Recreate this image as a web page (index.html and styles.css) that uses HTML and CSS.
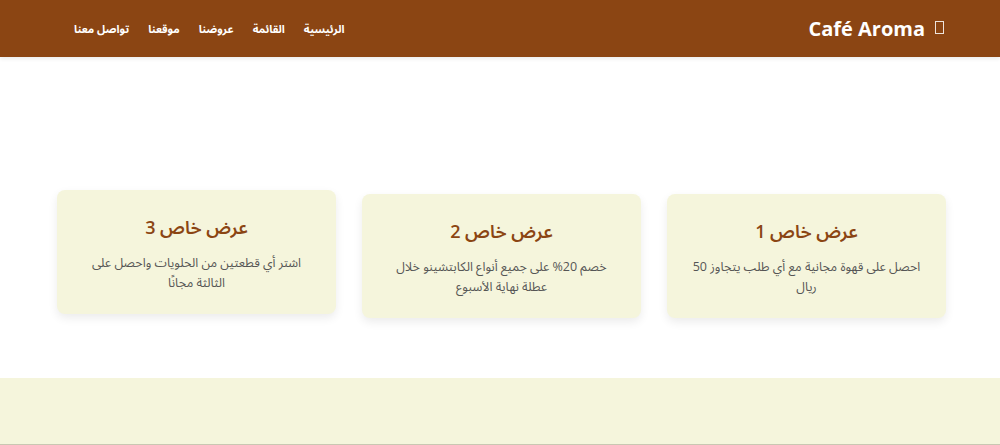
FILE: index.html
```html
<!DOCTYPE html>
<html lang="ar" dir="rtl">
<head>
<meta charset="utf-8">
<title>Café Aroma</title>
<link rel="stylesheet" href="styles.css">
</head>
<body>
<header class="site-header">
  <div class="logo"><span class="icon-box"></span><span class="logo-text">Café Aroma</span></div>
  <nav class="nav">
    <a href="#">الرئيسية</a>
    <a href="#">القائمة</a>
    <a href="#">عروضنا</a>
    <a href="#">موقعنا</a>
    <a href="#">تواصل معنا</a>
  </nav>
</header>
<section class="offers">
  <div class="cards">
    <div class="card">
      <h3>عرض خاص 1</h3>
      <p>احصل على قهوة مجانية مع أي طلب يتجاوز 50 ريال</p>
    </div>
    <div class="card">
      <h3>عرض خاص 2</h3>
      <p>خصم 20% على جميع أنواع الكابتشينو خلال عطلة نهاية الأسبوع</p>
    </div>
    <div class="card raised">
      <h3>عرض خاص 3</h3>
      <p>اشتر أي قطعتين من الحلويات واحصل على الثالثة مجانًا</p>
    </div>
  </div>
</section>
<section class="location"></section>
</body>
</html>
```
FILE: styles.css
```css
* { box-sizing: border-box; }
html, body { margin: 0; padding: 0; }
body {
  font-family: "Open Sans", "Noto Sans Arabic", "Noto Sans", "DejaVu Sans", sans-serif;
  background: #fff;
  color: #333;
  height: 445px;
  overflow: hidden;
}
.site-header {
  height: 57px;
  background: #8b4513;
  display: flex;
  align-items: center;
  justify-content: space-between;
  padding: 0 56px 0 74px;
  box-shadow: 0 2px 4px rgba(0,0,0,0.08);
}
.logo {
  display: flex;
  align-items: center;
  gap: 10px;
  color: #fff;
}
.logo-text {
  font-size: 20px;
  font-weight: 700;
  direction: ltr;
}
.icon-box {
  width: 9px;
  height: 13px;
  border: 1px solid rgba(255,255,255,0.85);
  margin-top: -2px;
}
.nav {
  display: flex;
  gap: 19px;
  padding-top: 1px;
}
.nav a {
  color: #fff;
  text-decoration: none;
  font-size: 11px;
  font-weight: 700;
}
.offers {
  height: 321px;
  padding: 137px 54px 0 57px;
}
.cards {
  display: grid;
  grid-template-columns: repeat(3, 1fr);
  gap: 26px;
}
.card {
  background: #f5f5dc;
  border-radius: 8px;
  box-shadow: 0 4px 10px rgba(0,0,0,0.08);
  padding: 23px 24px 20px;
  text-align: center;
  height: 124px;
}
.card.raised { transform: translateY(-4px); }
.card h3 {
  margin: 0 0 12px;
  color: #8b4513;
  font-size: 18px;
  font-weight: 600;
  line-height: 28px;
}
.card p {
  margin: 0;
  color: #555;
  font-size: 12.5px;
  line-height: 20px;
}
.location {
  height: 67px;
  background: #f5f5dc;
  border-bottom: 1px solid #c9c7b2;
}
```
